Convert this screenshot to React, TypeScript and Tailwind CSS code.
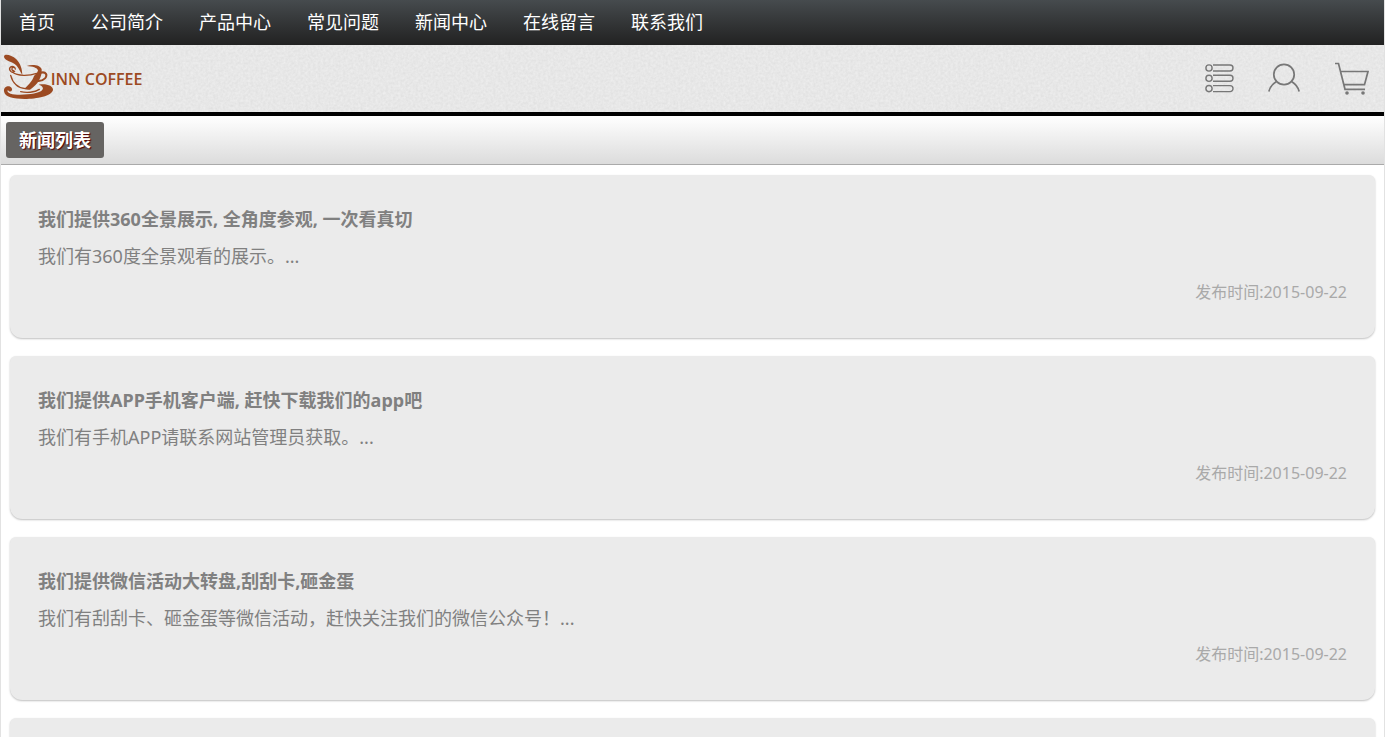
import type { ReactNode } from "react";

type NewsItem = {
  id: number;
  title: string;
  summary: string;
  date: string;
};

const navItems = ["首页", "公司简介", "产品中心", "常见问题", "新闻中心", "在线留言", "联系我们"];

const newsItems: NewsItem[] = [
  {
    id: 1,
    title: "我们提供360全景展示, 全角度参观, 一次看真切",
    summary: "我们有360度全景观看的展示。...",
    date: "2015-09-22",
  },
  {
    id: 2,
    title: "我们提供APP手机客户端, 赶快下载我们的app吧",
    summary: "我们有手机APP请联系网站管理员获取。...",
    date: "2015-09-22",
  },
  {
    id: 3,
    title: "我们提供微信活动大转盘,刮刮卡,砸金蛋",
    summary: "我们有刮刮卡、砸金蛋等微信活动，赶快关注我们的微信公众号！...",
    date: "2015-09-22",
  },
];

function PaperTexture() {
  return (
    <svg className="absolute inset-0 h-full w-full" aria-hidden="true">
      <filter id="paper" x="0" y="0" width="100%" height="100%" colorInterpolationFilters="sRGB">
        <feTurbulence type="fractalNoise" baseFrequency="0.4" numOctaves="2" seed="4" result="noise" />
        <feColorMatrix
          in="noise"
          type="matrix"
          values="0.07 0 0 0 0.872  0.07 0 0 0 0.872  0.07 0 0 0 0.872  0 0 0 0 1"
        />
      </filter>
      <rect width="100%" height="100%" filter="url(#paper)" />
    </svg>
  );
}

function Logo() {
  return (
    <svg width="144" height="67" viewBox="3 3 432 201" fill="none" role="img" aria-label="INN COFFEE">
      <g fill="#9c4a22">
        <path d="M12 38 C12 28 34 32 49 46 C62 60 66 74 67 92 C62 86 58 74 50 65 C38 52 12 50 12 38Z" />
        <path d="M80 66 C98 60 122 64 125 76 C127 98 114 122 90 137 C84 138 78 137 73 134 C92 118 100 104 102 96 C106 92 113 86 114 79 C112 71 98 67 80 66Z" />
        <path d="M12 142 C10 128 28 122 35 132 C40 142 28 147 24 138 C18 144 30 152 52 152 C86 153 118 148 126 139 C132 132 128 126 116 122 C140 118 160 126 159 138 C156 156 110 165 74 165 C40 165 14 160 12 142Z" />
      </g>
      <g stroke="#9c4a22" strokeLinecap="round">
        <path d="M41 80 C34 80 34 71 40 70 M44 82 C34 90 25 76 31 70 C36 65 45 68 46 75" strokeWidth="4" />
        <path d="M38 85 C52 97 88 96 110 88" strokeWidth="4" />
        <path d="M32 94 C38 116 54 132 76 134" strokeWidth="4" />
        <path d="M122 86 C139 82 143 94 135 103 C129 109 120 112 112 111" strokeWidth="6" />
        <path d="M62 143 C78 147 104 146 118 136" strokeWidth="4" />
      </g>
      <text x="152" y="122" fill="#9c4a22" className="font-['Open_Sans'] text-[48px] font-semibold">
        INN COFFEE
      </text>
    </svg>
  );
}

function ListIcon() {
  return (
    <svg width="32" height="32" viewBox="0 0 32 32" fill="none" stroke="#777" strokeWidth="1.4">
      {[5, 15.3, 25.6].map((y) => (
        <g key={y}>
          <circle cx="5" cy={y} r="3.1" />
          <path d={`M9 ${y - 3}H26a3 3 0 0 1 0 6H9`} />
        </g>
      ))}
    </svg>
  );
}

function UserIcon() {
  return (
    <svg width="32" height="32" viewBox="0 0 32 32" fill="none" stroke="#777" strokeWidth="1.7">
      <circle cx="16" cy="11.5" r="10.2" />
      <path d="M8.5 18.5C3.5 21.5 1.8 24.5 .8 28.5M23.5 18.5C28.5 21.5 30.2 24.5 31.2 28.5" />
    </svg>
  );
}

function CartIcon() {
  return (
    <svg width="38" height="34" viewBox="-2 0 38 34" fill="none" stroke="#777" strokeWidth="1.7">
      <path d="M1 1.5H4.5L11 27.3H31M6.5 9.5H34L30.5 22.7H10" />
      <circle cx="13" cy="31" r="1.8" fill="#777" stroke="none" />
      <circle cx="29" cy="31" r="1.8" fill="#777" stroke="none" />
    </svg>
  );
}

function IconButton({ label, children }: { label: string; children: ReactNode }) {
  return (
    <button type="button" aria-label={label} className="cursor-pointer">
      {children}
    </button>
  );
}

function NewsCard({ item }: { item: NewsItem }) {
  return (
    <a
      href="#"
      className="block rounded-t-md rounded-b-xl bg-[#ebebeb] px-7 pt-[26px] pb-7 text-[#808080] shadow-[0_1px_2px_rgba(0,0,0,0.25)]"
    >
      <h2 className="mb-px text-lg leading-9 font-bold">{item.title}</h2>
      <p className="text-lg leading-9">{item.summary}</p>
      <p className="text-right text-base leading-9 text-[#a9a9a9]">发布时间:{item.date}</p>
    </a>
  );
}

export default function App() {
  return (
    <div className="h-screen overflow-hidden border-x border-[#e2e2e2] bg-white font-['Noto_Sans','Noto_Sans_CJK_SC',sans-serif]">
      <nav className="flex h-[45px] bg-linear-to-b from-[#464b4e] to-[#222]">
        {navItems.map((label) => (
          <a key={label} href="#" className="px-[18px] text-lg leading-[45px] text-white">
            {label}
          </a>
        ))}
      </nav>

      <header className="relative border-b-4 border-black bg-[#e6e6e6]">
        <PaperTexture />
        <div className="relative flex items-center justify-between pr-3.5">
          <a href="#">
            <Logo />
          </a>
          <div className="flex items-center gap-8">
            <IconButton label="分类">
              <ListIcon />
            </IconButton>
            <IconButton label="会员">
              <UserIcon />
            </IconButton>
            <IconButton label="购物车">
              <CartIcon />
            </IconButton>
          </div>
        </div>
      </header>

      <div className="flex border-b border-[#aaa] bg-linear-to-b from-white to-[#dcdcdc] px-[5px] py-1.5">
        <h1 className="rounded-[3px] bg-[#666462] px-[13px] text-lg leading-9 font-bold text-white [text-shadow:1px_1px_1px_#500]">
          新闻列表
        </h1>
      </div>

      <main className="flex flex-col gap-[18px] px-[9px] py-2.5">
        {newsItems.map((item) => (
          <NewsCard key={item.id} item={item} />
        ))}
        <div className="h-[163px] shrink-0 rounded-t-md rounded-b-xl bg-[#ebebeb] shadow-[0_1px_2px_rgba(0,0,0,0.25)]" />
      </main>
    </div>
  );
}
